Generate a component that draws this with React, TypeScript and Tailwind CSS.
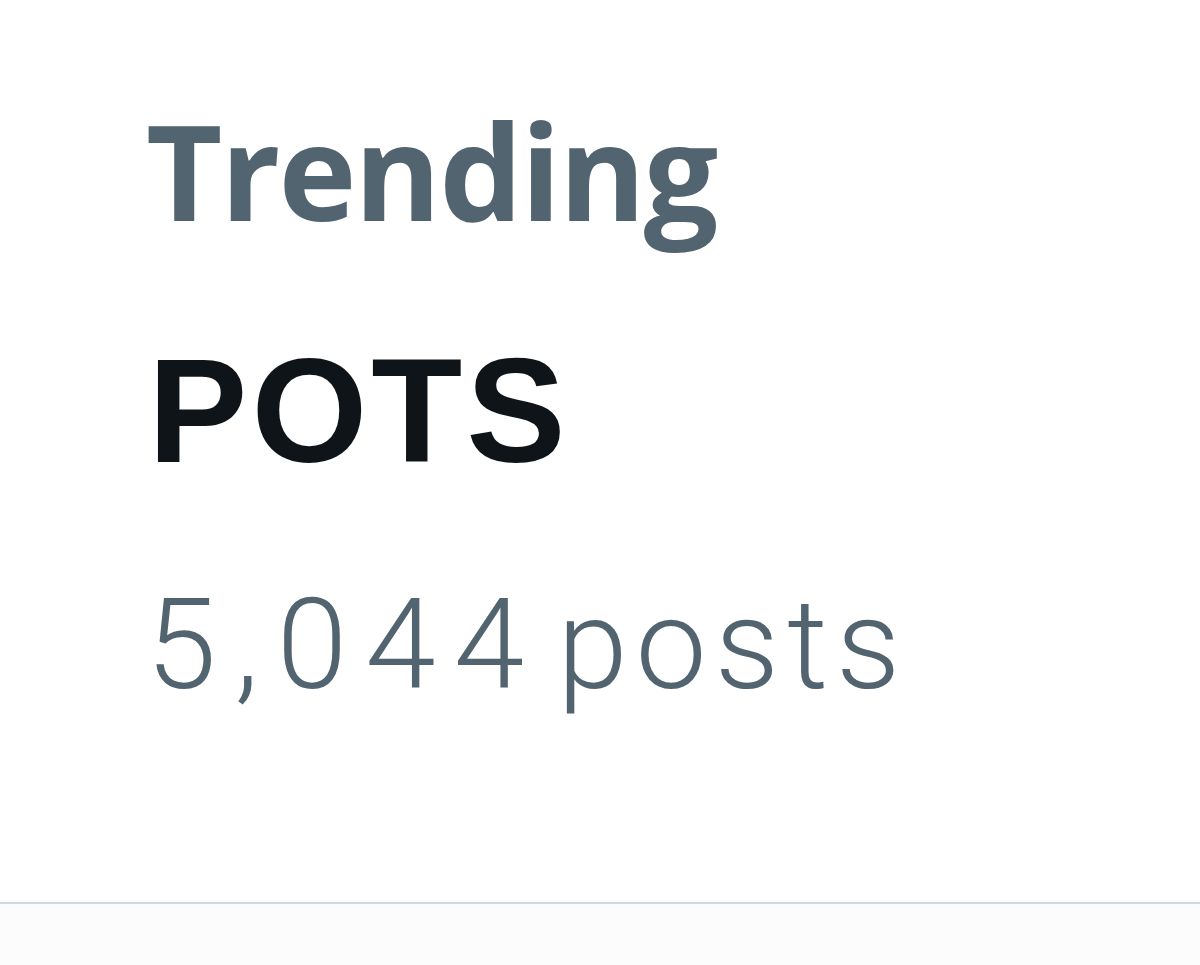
export default function App() {
  return (
    <div className="w-[1200px] h-[965px] bg-[#fcfcfd] overflow-hidden">
      <div className="h-[904px] bg-white border-b-2 border-[#cfd9de] pl-[146px] pt-[104px] flex flex-col items-start">
        <span className="font-['Open_Sans',sans-serif] text-[132px] leading-none font-bold tracking-[-2px] text-[#536471]">
          Trending
        </span>
        <span className="mt-[100px] ml-[2px] font-['Liberation_Sans',Arial,sans-serif] text-[149px] leading-none font-bold tracking-[4px] text-[#0f1419]">
          POTS
        </span>
        <div className="mt-[96px] flex items-baseline gap-[33px] font-['Roboto',sans-serif] text-[127px] leading-none font-light text-[#536471]">
          <span className="tracking-[18px] mr-[-18px]">5,044</span>
          <span className="tracking-[8px]">posts</span>
        </div>
      </div>
    </div>
  );
}
